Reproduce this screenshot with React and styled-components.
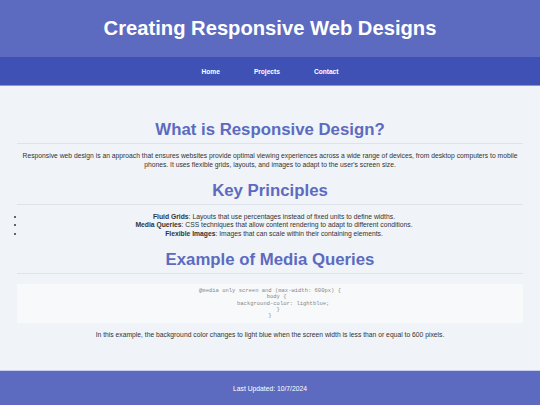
import React from 'react';
import styled, { createGlobalStyle } from 'styled-components';

const GlobalStyle = createGlobalStyle`
  html, body {
    margin: 0;
    padding: 0;
    background-color: #f0f4f8;
    font-family: 'Liberation Sans', Arial, sans-serif;
    color: #333;
  }
`;

const Header = styled.header`
  background-color: #5c6bc0;
  color: #fff;
  height: 57px;
  display: flex;
  align-items: center;
  justify-content: center;
`;

const Title = styled.h1`
  margin: 0;
  font-size: 20.2px;
  font-weight: bold;
`;

const Nav = styled.nav`
  background-color: #3f51b5;
  height: 28px;
  display: flex;
  align-items: center;
  justify-content: center;
  gap: 34px;
  border-bottom: 1px solid #8a97d6;
`;

const NavLink = styled.a`
  color: #fff;
  font-size: 6.6px;
  font-weight: bold;
  text-decoration: none;
`;

const Main = styled.main`
  padding: 21.5px 17px 21px;
  text-align: center;
`;

const Heading = styled.h2`
  margin: 12px 0 0;
  padding-bottom: 4px;
  font-size: 16.8px;
  line-height: 19px;
  color: #5c6bc0;
  border-bottom: 1px solid #dde3ea;
`;

const Text = styled.p`
  margin: 7px 0 10px;
  font-size: 6.75px;
  line-height: 9px;
`;

const List = styled.ul`
  margin: 8px 0 10px;
  padding: 0 0 0 8px;
  font-size: 6.75px;
  line-height: 8.5px;
`;

const Code = styled.pre`
  margin: 10px 0 0;
  padding: 4px 5px;
  background-color: #f8f9fa;
  font-family: 'Liberation Mono', 'Courier New', monospace;
  font-size: 5.5px;
  line-height: 6.3px;
  color: #888;

  & + p {
    margin-top: 6.5px;
  }
`;

const Footer = styled.footer`
  background-color: #5c6bc0;
  color: #fff;
  height: 36px;
  display: flex;
  align-items: center;
  justify-content: center;
  font-size: 6.75px;
  border-top: 1px solid #c8cfee;
`;

const principles = [
  ['Fluid Grids', 'Layouts that use percentages instead of fixed units to define widths.'],
  ['Media Queries', 'CSS techniques that allow content rendering to adapt to different conditions.'],
  ['Flexible Images', 'Images that can scale within their containing elements.'],
];

const codeSample = `@media only screen and (max-width: 600px) {
    body {
        background-color: lightblue;
     }
}`;

export default function App() {
  return (
    <>
      <GlobalStyle />
      <Header>
        <Title>Creating Responsive Web Designs</Title>
      </Header>
      <Nav>
        <NavLink href="#">Home</NavLink>
        <NavLink href="#">Projects</NavLink>
        <NavLink href="#">Contact</NavLink>
      </Nav>
      <Main>
        <Heading>What is Responsive Design?</Heading>
        <Text>
          Responsive web design is an approach that ensures websites provide optimal viewing experiences across a wide range of devices, from desktop computers to mobile phones. It uses flexible grids, layouts, and images to adapt to the user's screen size.
        </Text>
        <Heading>Key Principles</Heading>
        <List>
          {principles.map(([name, desc]) => (
            <li key={name}><strong>{name}</strong>: {desc}</li>
          ))}
        </List>
        <Heading>Example of Media Queries</Heading>
        <Code>{codeSample}</Code>
        <Text>In this example, the background color changes to light blue when the screen width is less than or equal to 600 pixels.</Text>
      </Main>
      <Footer>Last Updated: 10/7/2024</Footer>
    </>
  );
}
